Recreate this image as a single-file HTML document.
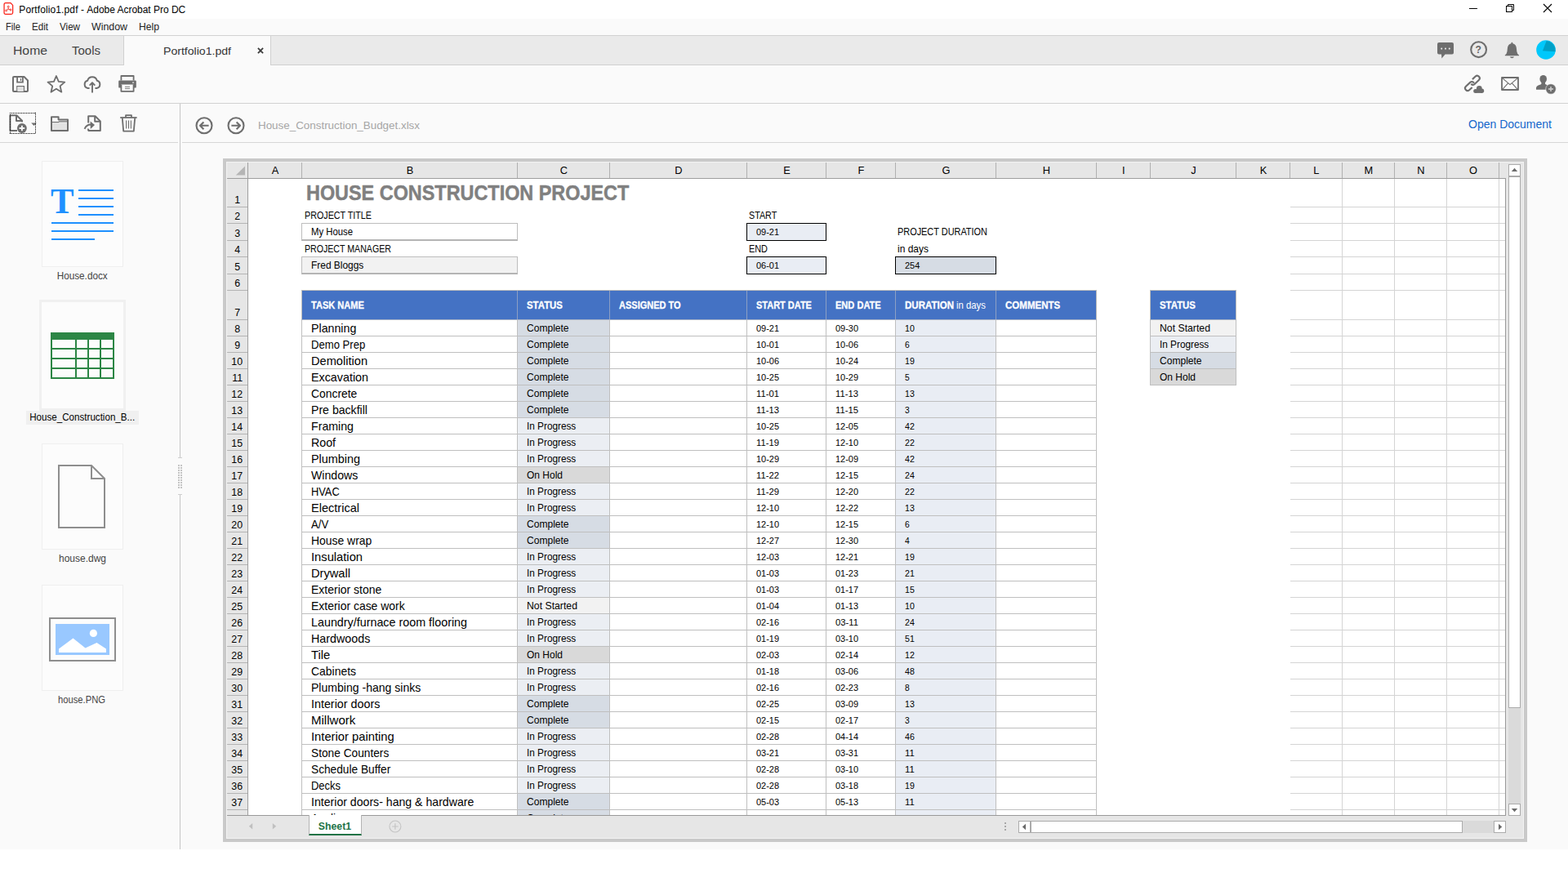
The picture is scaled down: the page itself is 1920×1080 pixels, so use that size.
<!DOCTYPE html>
<html lang="en">
<head>
<meta charset="utf-8">
<title>Portfolio1.pdf - Adobe Acrobat Pro DC</title>
<style>
*{box-sizing:border-box}
html,body{margin:0;padding:0}
body{width:1920px;height:1080px;position:relative;overflow:hidden;background:#fff;font-family:"Liberation Sans",sans-serif;}
.t{position:absolute;white-space:nowrap;line-height:1;display:block}
.r{position:absolute}
.ov{position:absolute;overflow:visible}
</style>
</head>
<body>
<div class="r" style="left:0px;top:0px;width:1920px;height:23px;background:#ffffff;"></div>
<div class="r" style="left:0px;top:23px;width:1920px;height:20px;background:#fafafa;"></div>
<div class="r" style="left:0px;top:43px;width:1920px;height:1px;background:#d2d2d2;"></div>
<div class="r" style="left:0px;top:44px;width:1920px;height:35px;background:#eaeaea;"></div>
<div class="r" style="left:0px;top:79px;width:1920px;height:1px;background:#d0d0d0;"></div>
<div class="r" style="left:151px;top:44px;width:1px;height:36px;background:#d0d0d0;"></div>
<div class="r" style="left:152px;top:44px;width:179px;height:36px;background:#fafafa;"></div>
<div class="r" style="left:331px;top:44px;width:1px;height:36px;background:#d0d0d0;"></div>
<div class="r" style="left:0px;top:80px;width:1920px;height:46px;background:#fafafa;"></div>
<div class="r" style="left:0px;top:126px;width:1920px;height:1px;background:#d2d2d2;"></div>
<div class="r" style="left:0px;top:127px;width:1920px;height:913px;background:#fafafa;"></div>
<div class="r" style="left:220px;top:127px;width:1px;height:913px;background:#c6c6c6;"></div>
<div class="r" style="left:0px;top:174px;width:218px;height:1px;background:#d6d6d6;"></div>
<div class="r" style="left:223px;top:174px;width:1697px;height:1px;background:#d6d6d6;"></div>
<svg class="ov" style="left:4px;top:3.4px" width="13" height="15" viewBox="0 0 13 16"><path d="M2.6 0.7 H9.2 L12 3.6 V13.4 Q12 15.3 10 15.3 H2.6 Q0.7 15.3 0.7 13.4 V2.6 Q0.7 0.7 2.6 0.7 Z" fill="#fff" stroke="#fa1e14" stroke-width="1.3"/><circle cx="6.2" cy="5.6" r="1.1" fill="none" stroke="#f0261c" stroke-width="0.9"/><circle cx="3.4" cy="10.6" r="1.1" fill="none" stroke="#f0261c" stroke-width="0.9"/><circle cx="9.2" cy="9.6" r="1.1" fill="none" stroke="#f0261c" stroke-width="0.9"/><path d="M6.2 6.6 L6 8.6 L4 10 M6 8.6 L8.3 9.3" fill="none" stroke="#f0261c" stroke-width="0.9"/></svg>
<span class="t" style="left:23.3px;top:5.84px;font-size:12px;color:#000;"><span style="letter-spacing:0.113px">Portfolio1.pdf</span> <span style="letter-spacing:0">-</span> <span style="letter-spacing:-0.025px">Adobe Acrobat Pro DC</span></span>
<div class="r" style="left:1799px;top:10px;width:10px;height:1px;background:#000;"></div>
<svg class="ov" style="left:1843px;top:4px" width="12" height="12" viewBox="0 0 12 12"><path d="M3.5 3.5 V1.5 H10.5 V8.5 H8.5" fill="none" stroke="#000" stroke-width="1"/><rect x="1.5" y="3.5" width="7" height="7" fill="none" stroke="#000" stroke-width="1"/></svg>
<svg class="ov" style="left:1890px;top:5px" width="10" height="10" viewBox="0 0 10 10"><path d="M0 0 L10 10 M10 0 L0 10" fill="none" stroke="#000" stroke-width="1.1"/></svg>
<span class="t" style="left:7.00px;top:26.84px;font-size:12.00px;color:#222;transform:scaleX(0.9309);transform-origin:0 0;">File</span>
<span class="t" style="left:39.00px;top:26.84px;font-size:12.00px;color:#222;transform:scaleX(0.9672);transform-origin:0 0;">Edit</span>
<span class="t" style="left:73.00px;top:26.84px;font-size:12.00px;color:#222;transform:scaleX(0.9692);transform-origin:0 0;">View</span>
<span class="t" style="left:112.00px;top:26.84px;font-size:12.00px;color:#222;transform:scaleX(1.0309);transform-origin:0 0;">Window</span>
<span class="t" style="left:170.00px;top:26.84px;font-size:12.00px;color:#222;transform:scaleX(1.0130);transform-origin:0 0;">Help</span>
<span class="t" style="left:16.00px;top:54.30px;font-size:15.00px;color:#444;transform:scaleX(1.0497);transform-origin:0 0;">Home</span>
<span class="t" style="left:88.00px;top:54.30px;font-size:15.00px;color:#444;transform:scaleX(0.9995);transform-origin:0 0;">Tools</span>
<span class="t" style="left:200.00px;top:55.57px;font-size:13.50px;color:#333;transform:scaleX(1.0434);transform-origin:0 0;">Portfolio1.pdf</span>
<svg class="ov" style="left:314.5px;top:57.6px" width="8" height="8" viewBox="0 0 8 8"><path d="M0.9 0.9 L7.1 7.1 M7.1 0.9 L0.9 7.1" fill="none" stroke="#3c3c3c" stroke-width="1.8"/></svg>
<span class="t" style="left:316.00px;top:146.50px;font-size:13.00px;color:#a6a6a6;transform:scaleX(1.0301);transform-origin:0 0;">House_Construction_Budget.xlsx</span>
<span class="t" style="left:1798.00px;top:145.15px;font-size:14.00px;color:#1467cc;transform:scaleX(1.0005);transform-origin:0 0;">Open Document</span>
<div class="r" style="left:51px;top:197px;width:100px;height:130px;background:#fcfcfc;border:1px solid #efefef;"></div>
<div class="r" style="left:48px;top:367px;width:106px;height:136px;background:#fcfcfc;border:3px solid #f0f0f0;"></div>
<div class="r" style="left:32px;top:503px;width:138px;height:17px;background:#f0f0f0;"></div>
<div class="r" style="left:51px;top:543px;width:100px;height:130px;background:#fcfcfc;border:1px solid #efefef;"></div>
<div class="r" style="left:51px;top:716px;width:100px;height:130px;background:#fcfcfc;border:1px solid #efefef;"></div>
<svg class="ov" style="left:0;top:0" width="240" height="1080" viewBox="0 0 240 1080">
<rect x="96" y="232" width="43" height="2" fill="#1e90ff"/>
<rect x="96" y="242" width="43" height="2" fill="#1e90ff"/>
<rect x="96" y="252" width="43" height="2" fill="#1e90ff"/>
<rect x="96" y="262" width="43" height="2" fill="#1e90ff"/>
<rect x="63" y="272" width="76" height="2" fill="#1e90ff"/>
<rect x="63" y="282" width="76" height="2" fill="#1e90ff"/>
<rect x="63" y="292" width="53" height="2" fill="#1e90ff"/>
<rect x="62" y="407" width="78" height="57" fill="#2c8645"/>
<rect x="64" y="416" width="28" height="10" fill="#fcfcfc"/>
<rect x="64" y="428" width="28" height="10" fill="#fcfcfc"/>
<rect x="64" y="440" width="28" height="10" fill="#fcfcfc"/>
<rect x="64" y="452" width="28" height="10" fill="#fcfcfc"/>
<rect x="94" y="416" width="13" height="10" fill="#fcfcfc"/>
<rect x="94" y="428" width="13" height="10" fill="#fcfcfc"/>
<rect x="94" y="440" width="13" height="10" fill="#fcfcfc"/>
<rect x="94" y="452" width="13" height="10" fill="#fcfcfc"/>
<rect x="109" y="416" width="13" height="10" fill="#fcfcfc"/>
<rect x="109" y="428" width="13" height="10" fill="#fcfcfc"/>
<rect x="109" y="440" width="13" height="10" fill="#fcfcfc"/>
<rect x="109" y="452" width="13" height="10" fill="#fcfcfc"/>
<rect x="124" y="416" width="14" height="10" fill="#fcfcfc"/>
<rect x="124" y="428" width="14" height="10" fill="#fcfcfc"/>
<rect x="124" y="440" width="14" height="10" fill="#fcfcfc"/>
<rect x="124" y="452" width="14" height="10" fill="#fcfcfc"/>
<path d="M72 570 H112 L128 586 V646 H72 Z M112 570 V586 H128" fill="none" stroke="#8e8e8e" stroke-width="2" stroke-linejoin="miter"/>
<rect x="61" y="757" width="80" height="52" fill="#fcfcfc" stroke="#8e8e8e" stroke-width="2"/>
<rect x="68" y="764" width="66" height="38" fill="#99c8ff"/>
<circle cx="114.4" cy="775.4" r="4.6" fill="#fff"/>
<path d="M72 799 V794.5 L89.5 781.5 L104.5 793.6 L118.5 787 L130 794.5 V799 Z" fill="#fff"/>
<rect x="217" y="561" width="7" height="44" fill="#fafafa"/>
<path d="M218 560.5 H223 M218 605.5 H223" stroke="#cfcfcf" stroke-width="1" fill="none"/>
<rect x="218" y="569" width="2" height="2" fill="#c4c4c4"/><rect x="221" y="569" width="2" height="2" fill="#c4c4c4"/>
<rect x="218" y="572" width="2" height="2" fill="#c4c4c4"/><rect x="221" y="572" width="2" height="2" fill="#c4c4c4"/>
<rect x="218" y="575" width="2" height="2" fill="#c4c4c4"/><rect x="221" y="575" width="2" height="2" fill="#c4c4c4"/>
<rect x="218" y="578" width="2" height="2" fill="#c4c4c4"/><rect x="221" y="578" width="2" height="2" fill="#c4c4c4"/>
<rect x="218" y="581" width="2" height="2" fill="#c4c4c4"/><rect x="221" y="581" width="2" height="2" fill="#c4c4c4"/>
<rect x="218" y="584" width="2" height="2" fill="#c4c4c4"/><rect x="221" y="584" width="2" height="2" fill="#c4c4c4"/>
<rect x="218" y="587" width="2" height="2" fill="#c4c4c4"/><rect x="221" y="587" width="2" height="2" fill="#c4c4c4"/>
<rect x="218" y="590" width="2" height="2" fill="#c4c4c4"/><rect x="221" y="590" width="2" height="2" fill="#c4c4c4"/>
<rect x="218" y="593" width="2" height="2" fill="#c4c4c4"/><rect x="221" y="593" width="2" height="2" fill="#c4c4c4"/>
<rect x="218" y="596" width="2" height="2" fill="#c4c4c4"/><rect x="221" y="596" width="2" height="2" fill="#c4c4c4"/>
</svg>
<span class="t" style="left:62.4px;top:223.6px;font-size:45px;font-weight:bold;color:#1e90ff;font-family:'Liberation Serif',serif;transform:scaleX(0.95);transform-origin:0 0;">T</span>
<span class="t" style="left:68.82px;top:331.84px;font-size:12.00px;color:#444;transform:scaleX(0.9784);transform-origin:50% 0;">House.docx</span>
<span class="t" style="left:34.30px;top:504.84px;font-size:12.00px;color:#000;transform:scaleX(0.9670);transform-origin:50% 0;">House_Construction_B...</span>
<span class="t" style="left:71.98px;top:677.84px;font-size:12.00px;color:#444;transform:scaleX(0.9993);transform-origin:50% 0;">house.dwg</span>
<span class="t" style="left:69.48px;top:851.34px;font-size:12.00px;color:#444;transform:scaleX(0.9350);transform-origin:50% 0;">house.PNG</span>
<div class="r" style="left:273px;top:194px;width:1597px;height:837px;background:#c9c9c9;"></div>
<div class="r" style="left:277px;top:198px;width:1589px;height:829px;background:#f3f3f3;"></div>
<div class="r" style="left:278px;top:199px;width:1587px;height:827px;background:#e6e6e6;"></div>
<div class="r" style="left:304px;top:219px;width:1539px;height:779px;background:#fff;overflow:hidden">
<div class="r" style="left:1276px;top:34px;width:264px;height:1px;background:#d4d4d4;"></div>
<div class="r" style="left:1276px;top:54px;width:264px;height:1px;background:#d4d4d4;"></div>
<div class="r" style="left:1276px;top:75px;width:264px;height:1px;background:#d4d4d4;"></div>
<div class="r" style="left:1276px;top:95px;width:264px;height:1px;background:#d4d4d4;"></div>
<div class="r" style="left:1276px;top:116px;width:264px;height:1px;background:#d4d4d4;"></div>
<div class="r" style="left:1276px;top:136px;width:264px;height:1px;background:#d4d4d4;"></div>
<div class="r" style="left:1276px;top:172px;width:264px;height:1px;background:#d4d4d4;"></div>
<div class="r" style="left:1276px;top:192px;width:264px;height:1px;background:#d4d4d4;"></div>
<div class="r" style="left:1276px;top:212px;width:264px;height:1px;background:#d4d4d4;"></div>
<div class="r" style="left:1276px;top:232px;width:264px;height:1px;background:#d4d4d4;"></div>
<div class="r" style="left:1276px;top:252px;width:264px;height:1px;background:#d4d4d4;"></div>
<div class="r" style="left:1276px;top:272px;width:264px;height:1px;background:#d4d4d4;"></div>
<div class="r" style="left:1276px;top:292px;width:264px;height:1px;background:#d4d4d4;"></div>
<div class="r" style="left:1276px;top:312px;width:264px;height:1px;background:#d4d4d4;"></div>
<div class="r" style="left:1276px;top:332px;width:264px;height:1px;background:#d4d4d4;"></div>
<div class="r" style="left:1276px;top:352px;width:264px;height:1px;background:#d4d4d4;"></div>
<div class="r" style="left:1276px;top:372px;width:264px;height:1px;background:#d4d4d4;"></div>
<div class="r" style="left:1276px;top:392px;width:264px;height:1px;background:#d4d4d4;"></div>
<div class="r" style="left:1276px;top:412px;width:264px;height:1px;background:#d4d4d4;"></div>
<div class="r" style="left:1276px;top:432px;width:264px;height:1px;background:#d4d4d4;"></div>
<div class="r" style="left:1276px;top:452px;width:264px;height:1px;background:#d4d4d4;"></div>
<div class="r" style="left:1276px;top:472px;width:264px;height:1px;background:#d4d4d4;"></div>
<div class="r" style="left:1276px;top:492px;width:264px;height:1px;background:#d4d4d4;"></div>
<div class="r" style="left:1276px;top:512px;width:264px;height:1px;background:#d4d4d4;"></div>
<div class="r" style="left:1276px;top:532px;width:264px;height:1px;background:#d4d4d4;"></div>
<div class="r" style="left:1276px;top:552px;width:264px;height:1px;background:#d4d4d4;"></div>
<div class="r" style="left:1276px;top:572px;width:264px;height:1px;background:#d4d4d4;"></div>
<div class="r" style="left:1276px;top:592px;width:264px;height:1px;background:#d4d4d4;"></div>
<div class="r" style="left:1276px;top:612px;width:264px;height:1px;background:#d4d4d4;"></div>
<div class="r" style="left:1276px;top:632px;width:264px;height:1px;background:#d4d4d4;"></div>
<div class="r" style="left:1276px;top:652px;width:264px;height:1px;background:#d4d4d4;"></div>
<div class="r" style="left:1276px;top:672px;width:264px;height:1px;background:#d4d4d4;"></div>
<div class="r" style="left:1276px;top:692px;width:264px;height:1px;background:#d4d4d4;"></div>
<div class="r" style="left:1276px;top:712px;width:264px;height:1px;background:#d4d4d4;"></div>
<div class="r" style="left:1276px;top:732px;width:264px;height:1px;background:#d4d4d4;"></div>
<div class="r" style="left:1276px;top:752px;width:264px;height:1px;background:#d4d4d4;"></div>
<div class="r" style="left:1276px;top:772px;width:264px;height:1px;background:#d4d4d4;"></div>
<div class="r" style="left:1339px;top:0px;width:1px;height:779px;background:#d4d4d4;"></div>
<div class="r" style="left:1403px;top:0px;width:1px;height:779px;background:#d4d4d4;"></div>
<div class="r" style="left:1467px;top:0px;width:1px;height:779px;background:#d4d4d4;"></div>
<div class="r" style="left:1531px;top:0px;width:1px;height:779px;background:#d4d4d4;"></div>
<span class="t" style="left:71.00px;top:4.02px;font-size:26.20px;color:#808080;font-weight:bold;transform:scaleX(0.8937);transform-origin:0 0;-webkit-text-stroke:0.5px #808080;">HOUSE CONSTRUCTION PROJECT</span>
<span class="t" style="left:68.50px;top:38.50px;font-size:12.40px;color:#000;transform:scaleX(0.8665);transform-origin:0 0;">PROJECT TITLE</span>
<span class="t" style="left:68.50px;top:79.50px;font-size:12.40px;color:#000;transform:scaleX(0.8563);transform-origin:0 0;">PROJECT MANAGER</span>
<span class="t" style="left:613.30px;top:38.50px;font-size:12.40px;color:#000;transform:scaleX(0.8683);transform-origin:0 0;">START</span>
<span class="t" style="left:613.30px;top:79.50px;font-size:12.40px;color:#000;transform:scaleX(0.8785);transform-origin:0 0;">END</span>
<span class="t" style="left:795.00px;top:58.50px;font-size:12.40px;color:#000;transform:scaleX(0.8805);transform-origin:0 0;">PROJECT DURATION</span>
<span class="t" style="left:795.00px;top:79.50px;font-size:12.40px;color:#000;transform:scaleX(0.9672);transform-origin:0 0;">in days</span>
<div class="r" style="left:65px;top:54px;width:265px;height:22px;background:#ffffff;border:1px solid #bdbdbd;border-bottom:2px solid #b4b4b4;"></div>
<div class="r" style="left:65px;top:95px;width:265px;height:22px;background:#f2f2f2;border:1px solid #bdbdbd;border-bottom:2px solid #b4b4b4;"></div>
<div class="r" style="left:610px;top:54px;width:98px;height:22px;background:#e9edf4;border:1px solid #000;"></div>
<div class="r" style="left:610px;top:95px;width:98px;height:22px;background:#e9edf4;border:1px solid #000;"></div>
<div class="r" style="left:792px;top:95px;width:124px;height:22px;background:#d6dce4;border:1px solid #000;"></div>
<span class="t" style="left:77.00px;top:58.70px;font-size:12.40px;color:#000;transform:scaleX(0.9137);transform-origin:0 0;">My House</span>
<span class="t" style="left:77.00px;top:99.70px;font-size:12.40px;color:#000;transform:scaleX(0.9618);transform-origin:0 0;">Fred Bloggs</span>
<span class="t" style="left:622.00px;top:59.55px;font-size:11.40px;color:#000;transform:scaleX(0.9603);transform-origin:0 0;">09-21</span>
<span class="t" style="left:622.00px;top:100.55px;font-size:11.40px;color:#000;transform:scaleX(0.9603);transform-origin:0 0;">06-01</span>
<span class="t" style="left:804.00px;top:100.55px;font-size:11.40px;color:#000;transform:scaleX(0.9621);transform-origin:0 0;">254</span>
<div class="r" style="left:65px;top:137px;width:974px;height:36px;background:#4472c4;"></div>
<div class="r" style="left:329px;top:137px;width:1px;height:36px;background:#8c9fc4;"></div>
<div class="r" style="left:442px;top:137px;width:1px;height:36px;background:#8c9fc4;"></div>
<div class="r" style="left:610px;top:137px;width:1px;height:36px;background:#8c9fc4;"></div>
<div class="r" style="left:707px;top:137px;width:1px;height:36px;background:#8c9fc4;"></div>
<div class="r" style="left:792px;top:137px;width:1px;height:36px;background:#8c9fc4;"></div>
<div class="r" style="left:915px;top:137px;width:1px;height:36px;background:#8c9fc4;"></div>
<div class="r" style="left:65px;top:136px;width:1px;height:37px;background:#bcbcbc;"></div>
<div class="r" style="left:1038px;top:136px;width:1px;height:37px;background:#bcbcbc;"></div>
<div class="r" style="left:65px;top:136px;width:974px;height:1px;background:#bcbcbc;"></div>
<div class="r" style="left:65px;top:172px;width:974px;height:1px;background:#a9b3c6;"></div>
<span class="t" style="left:77.00px;top:148.50px;font-size:12.40px;color:#fff;font-weight:bold;transform:scaleX(0.8930);transform-origin:0 0;-webkit-text-stroke:0.3px #fff;">TASK NAME</span>
<span class="t" style="left:341.00px;top:148.50px;font-size:12.40px;color:#fff;font-weight:bold;transform:scaleX(0.9213);transform-origin:0 0;-webkit-text-stroke:0.3px #fff;">STATUS</span>
<span class="t" style="left:454.00px;top:148.50px;font-size:12.40px;color:#fff;font-weight:bold;transform:scaleX(0.8884);transform-origin:0 0;-webkit-text-stroke:0.3px #fff;">ASSIGNED TO</span>
<span class="t" style="left:622.00px;top:148.50px;font-size:12.40px;color:#fff;font-weight:bold;transform:scaleX(0.8867);transform-origin:0 0;-webkit-text-stroke:0.3px #fff;">START DATE</span>
<span class="t" style="left:719.00px;top:148.50px;font-size:12.40px;color:#fff;font-weight:bold;transform:scaleX(0.8918);transform-origin:0 0;-webkit-text-stroke:0.3px #fff;">END DATE</span>
<span class="t" style="left:804.00px;top:148.50px;font-size:12.40px;color:#fff;font-weight:bold;transform:scaleX(0.9300);transform-origin:0 0;-webkit-text-stroke:0.3px #fff;">DURATION</span>
<span class="t" style="left:867.00px;top:148.50px;font-size:12.40px;color:#fff;transform:scaleX(0.9163);transform-origin:0 0;">in days</span>
<span class="t" style="left:927.00px;top:148.50px;font-size:12.40px;color:#fff;font-weight:bold;transform:scaleX(0.9305);transform-origin:0 0;-webkit-text-stroke:0.3px #fff;">COMMENTS</span>
<div class="r" style="left:1104px;top:137px;width:106px;height:36px;background:#4472c4;"></div>
<div class="r" style="left:1104px;top:136px;width:1px;height:37px;background:#bcbcbc;"></div>
<div class="r" style="left:1209px;top:136px;width:1px;height:37px;background:#bcbcbc;"></div>
<div class="r" style="left:1104px;top:136px;width:106px;height:1px;background:#bcbcbc;"></div>
<span class="t" style="left:1116.00px;top:148.50px;font-size:12.40px;color:#fff;font-weight:bold;transform:scaleX(0.9213);transform-origin:0 0;-webkit-text-stroke:0.3px #fff;">STATUS</span>
<div class="r" style="left:1104px;top:173px;width:106px;height:20px;background:#f2f2f2;border-left:1px solid #bfbfbf;border-right:1px solid #bfbfbf;border-bottom:1px solid #bfbfbf;"></div>
<span class="t" style="left:1116.00px;top:176.70px;font-size:12.40px;color:#000;transform:scaleX(0.9885);transform-origin:0 0;">Not Started</span>
<div class="r" style="left:1104px;top:193px;width:106px;height:20px;background:#ebeef3;border-left:1px solid #bfbfbf;border-right:1px solid #bfbfbf;border-bottom:1px solid #bfbfbf;"></div>
<span class="t" style="left:1116.00px;top:196.70px;font-size:12.40px;color:#000;transform:scaleX(0.9510);transform-origin:0 0;">In Progress</span>
<div class="r" style="left:1104px;top:213px;width:106px;height:20px;background:#d6dce4;border-left:1px solid #bfbfbf;border-right:1px solid #bfbfbf;border-bottom:1px solid #bfbfbf;"></div>
<span class="t" style="left:1116.00px;top:216.70px;font-size:12.40px;color:#000;transform:scaleX(0.9723);transform-origin:0 0;">Complete</span>
<div class="r" style="left:1104px;top:233px;width:106px;height:20px;background:#d9d9d9;border-left:1px solid #bfbfbf;border-right:1px solid #bfbfbf;border-bottom:1px solid #bfbfbf;"></div>
<span class="t" style="left:1116.00px;top:236.70px;font-size:12.40px;color:#000;transform:scaleX(0.9673);transform-origin:0 0;">On Hold</span>
<div class="r" style="left:1104px;top:172px;width:106px;height:1px;background:#a9b3c6;"></div>
<div class="r" style="left:330px;top:173px;width:112px;height:19px;background:#d6dce4;"></div>
<div class="r" style="left:793px;top:173px;width:122px;height:19px;background:#e9edf4;"></div>
<div class="r" style="left:65px;top:192px;width:974px;height:1px;background:#bfbfbf;"></div>
<span class="t" style="left:77.00px;top:174.50px;font-size:15.00px;color:#000;transform:scaleX(0.9472);transform-origin:0 0;">Planning</span>
<span class="t" style="left:341.00px;top:176.70px;font-size:12.40px;color:#000;transform:scaleX(0.9723);transform-origin:0 0;">Complete</span>
<span class="t" style="left:622.00px;top:177.55px;font-size:11.40px;color:#000;transform:scaleX(0.9603);transform-origin:0 0;">09-21</span>
<span class="t" style="left:719.00px;top:177.55px;font-size:11.40px;color:#000;transform:scaleX(0.9603);transform-origin:0 0;">09-30</span>
<span class="t" style="left:804.00px;top:177.55px;font-size:11.40px;color:#000;transform:scaleX(0.9306);transform-origin:0 0;">10</span>
<div class="r" style="left:330px;top:193px;width:112px;height:19px;background:#d6dce4;"></div>
<div class="r" style="left:793px;top:193px;width:122px;height:19px;background:#e9edf4;"></div>
<div class="r" style="left:65px;top:212px;width:974px;height:1px;background:#bfbfbf;"></div>
<span class="t" style="left:77.00px;top:194.50px;font-size:15.00px;color:#000;transform:scaleX(0.8739);transform-origin:0 0;">Demo Prep</span>
<span class="t" style="left:341.00px;top:196.70px;font-size:12.40px;color:#000;transform:scaleX(0.9723);transform-origin:0 0;">Complete</span>
<span class="t" style="left:622.00px;top:197.55px;font-size:11.40px;color:#000;transform:scaleX(0.9603);transform-origin:0 0;">10-01</span>
<span class="t" style="left:719.00px;top:197.55px;font-size:11.40px;color:#000;transform:scaleX(0.9603);transform-origin:0 0;">10-06</span>
<span class="t" style="left:804.00px;top:197.55px;font-size:11.40px;color:#000;transform:scaleX(0.8990);transform-origin:0 0;">6</span>
<div class="r" style="left:330px;top:213px;width:112px;height:19px;background:#d6dce4;"></div>
<div class="r" style="left:793px;top:213px;width:122px;height:19px;background:#e9edf4;"></div>
<div class="r" style="left:65px;top:232px;width:974px;height:1px;background:#bfbfbf;"></div>
<span class="t" style="left:77.00px;top:214.50px;font-size:15.00px;color:#000;transform:scaleX(0.9737);transform-origin:0 0;">Demolition</span>
<span class="t" style="left:341.00px;top:216.70px;font-size:12.40px;color:#000;transform:scaleX(0.9723);transform-origin:0 0;">Complete</span>
<span class="t" style="left:622.00px;top:217.55px;font-size:11.40px;color:#000;transform:scaleX(0.9603);transform-origin:0 0;">10-06</span>
<span class="t" style="left:719.00px;top:217.55px;font-size:11.40px;color:#000;transform:scaleX(0.9603);transform-origin:0 0;">10-24</span>
<span class="t" style="left:804.00px;top:217.55px;font-size:11.40px;color:#000;transform:scaleX(0.9306);transform-origin:0 0;">19</span>
<div class="r" style="left:330px;top:233px;width:112px;height:19px;background:#d6dce4;"></div>
<div class="r" style="left:793px;top:233px;width:122px;height:19px;background:#e9edf4;"></div>
<div class="r" style="left:65px;top:252px;width:974px;height:1px;background:#bfbfbf;"></div>
<span class="t" style="left:77.00px;top:234.50px;font-size:15.00px;color:#000;transform:scaleX(0.9540);transform-origin:0 0;">Excavation</span>
<span class="t" style="left:341.00px;top:236.70px;font-size:12.40px;color:#000;transform:scaleX(0.9723);transform-origin:0 0;">Complete</span>
<span class="t" style="left:622.00px;top:237.55px;font-size:11.40px;color:#000;transform:scaleX(0.9603);transform-origin:0 0;">10-25</span>
<span class="t" style="left:719.00px;top:237.55px;font-size:11.40px;color:#000;transform:scaleX(0.9603);transform-origin:0 0;">10-29</span>
<span class="t" style="left:804.00px;top:237.55px;font-size:11.40px;color:#000;transform:scaleX(0.8990);transform-origin:0 0;">5</span>
<div class="r" style="left:330px;top:253px;width:112px;height:19px;background:#d6dce4;"></div>
<div class="r" style="left:793px;top:253px;width:122px;height:19px;background:#e9edf4;"></div>
<div class="r" style="left:65px;top:272px;width:974px;height:1px;background:#bfbfbf;"></div>
<span class="t" style="left:77.00px;top:254.50px;font-size:15.00px;color:#000;transform:scaleX(0.9250);transform-origin:0 0;">Concrete</span>
<span class="t" style="left:341.00px;top:256.70px;font-size:12.40px;color:#000;transform:scaleX(0.9723);transform-origin:0 0;">Complete</span>
<span class="t" style="left:622.00px;top:257.55px;font-size:11.40px;color:#000;transform:scaleX(0.9890);transform-origin:0 0;">11-01</span>
<span class="t" style="left:719.00px;top:257.55px;font-size:11.40px;color:#000;transform:scaleX(0.9890);transform-origin:0 0;">11-13</span>
<span class="t" style="left:804.00px;top:257.55px;font-size:11.40px;color:#000;transform:scaleX(0.9306);transform-origin:0 0;">13</span>
<div class="r" style="left:330px;top:273px;width:112px;height:19px;background:#d6dce4;"></div>
<div class="r" style="left:793px;top:273px;width:122px;height:19px;background:#e9edf4;"></div>
<div class="r" style="left:65px;top:292px;width:974px;height:1px;background:#bfbfbf;"></div>
<span class="t" style="left:77.00px;top:274.50px;font-size:15.00px;color:#000;transform:scaleX(0.9406);transform-origin:0 0;">Pre backfill</span>
<span class="t" style="left:341.00px;top:276.70px;font-size:12.40px;color:#000;transform:scaleX(0.9723);transform-origin:0 0;">Complete</span>
<span class="t" style="left:622.00px;top:277.55px;font-size:11.40px;color:#000;transform:scaleX(0.9890);transform-origin:0 0;">11-13</span>
<span class="t" style="left:719.00px;top:277.55px;font-size:11.40px;color:#000;transform:scaleX(0.9890);transform-origin:0 0;">11-15</span>
<span class="t" style="left:804.00px;top:277.55px;font-size:11.40px;color:#000;transform:scaleX(0.8990);transform-origin:0 0;">3</span>
<div class="r" style="left:330px;top:293px;width:112px;height:19px;background:#ebeef3;"></div>
<div class="r" style="left:793px;top:293px;width:122px;height:19px;background:#e9edf4;"></div>
<div class="r" style="left:65px;top:312px;width:974px;height:1px;background:#bfbfbf;"></div>
<span class="t" style="left:77.00px;top:294.50px;font-size:15.00px;color:#000;transform:scaleX(0.9452);transform-origin:0 0;">Framing</span>
<span class="t" style="left:341.00px;top:296.70px;font-size:12.40px;color:#000;transform:scaleX(0.9510);transform-origin:0 0;">In Progress</span>
<span class="t" style="left:622.00px;top:297.55px;font-size:11.40px;color:#000;transform:scaleX(0.9603);transform-origin:0 0;">10-25</span>
<span class="t" style="left:719.00px;top:297.55px;font-size:11.40px;color:#000;transform:scaleX(0.9603);transform-origin:0 0;">12-05</span>
<span class="t" style="left:804.00px;top:297.55px;font-size:11.40px;color:#000;transform:scaleX(0.9306);transform-origin:0 0;">42</span>
<div class="r" style="left:330px;top:313px;width:112px;height:19px;background:#ebeef3;"></div>
<div class="r" style="left:793px;top:313px;width:122px;height:19px;background:#e9edf4;"></div>
<div class="r" style="left:65px;top:332px;width:974px;height:1px;background:#bfbfbf;"></div>
<span class="t" style="left:77.00px;top:314.50px;font-size:15.00px;color:#000;transform:scaleX(0.9468);transform-origin:0 0;">Roof</span>
<span class="t" style="left:341.00px;top:316.70px;font-size:12.40px;color:#000;transform:scaleX(0.9510);transform-origin:0 0;">In Progress</span>
<span class="t" style="left:622.00px;top:317.55px;font-size:11.40px;color:#000;transform:scaleX(0.9890);transform-origin:0 0;">11-19</span>
<span class="t" style="left:719.00px;top:317.55px;font-size:11.40px;color:#000;transform:scaleX(0.9603);transform-origin:0 0;">12-10</span>
<span class="t" style="left:804.00px;top:317.55px;font-size:11.40px;color:#000;transform:scaleX(0.9306);transform-origin:0 0;">22</span>
<div class="r" style="left:330px;top:333px;width:112px;height:19px;background:#ebeef3;"></div>
<div class="r" style="left:793px;top:333px;width:122px;height:19px;background:#e9edf4;"></div>
<div class="r" style="left:65px;top:352px;width:974px;height:1px;background:#bfbfbf;"></div>
<span class="t" style="left:77.00px;top:334.50px;font-size:15.00px;color:#000;transform:scaleX(0.9595);transform-origin:0 0;">Plumbing</span>
<span class="t" style="left:341.00px;top:336.70px;font-size:12.40px;color:#000;transform:scaleX(0.9510);transform-origin:0 0;">In Progress</span>
<span class="t" style="left:622.00px;top:337.55px;font-size:11.40px;color:#000;transform:scaleX(0.9603);transform-origin:0 0;">10-29</span>
<span class="t" style="left:719.00px;top:337.55px;font-size:11.40px;color:#000;transform:scaleX(0.9603);transform-origin:0 0;">12-09</span>
<span class="t" style="left:804.00px;top:337.55px;font-size:11.40px;color:#000;transform:scaleX(0.9306);transform-origin:0 0;">42</span>
<div class="r" style="left:330px;top:353px;width:112px;height:19px;background:#d9d9d9;"></div>
<div class="r" style="left:793px;top:353px;width:122px;height:19px;background:#e9edf4;"></div>
<div class="r" style="left:65px;top:372px;width:974px;height:1px;background:#bfbfbf;"></div>
<span class="t" style="left:77.00px;top:354.50px;font-size:15.00px;color:#000;transform:scaleX(0.9417);transform-origin:0 0;">Windows</span>
<span class="t" style="left:341.00px;top:356.70px;font-size:12.40px;color:#000;transform:scaleX(0.9673);transform-origin:0 0;">On Hold</span>
<span class="t" style="left:622.00px;top:357.55px;font-size:11.40px;color:#000;transform:scaleX(0.9890);transform-origin:0 0;">11-22</span>
<span class="t" style="left:719.00px;top:357.55px;font-size:11.40px;color:#000;transform:scaleX(0.9603);transform-origin:0 0;">12-15</span>
<span class="t" style="left:804.00px;top:357.55px;font-size:11.40px;color:#000;transform:scaleX(0.9306);transform-origin:0 0;">24</span>
<div class="r" style="left:330px;top:373px;width:112px;height:19px;background:#ebeef3;"></div>
<div class="r" style="left:793px;top:373px;width:122px;height:19px;background:#e9edf4;"></div>
<div class="r" style="left:65px;top:392px;width:974px;height:1px;background:#bfbfbf;"></div>
<span class="t" style="left:77.00px;top:374.50px;font-size:15.00px;color:#000;transform:scaleX(0.8555);transform-origin:0 0;">HVAC</span>
<span class="t" style="left:341.00px;top:376.70px;font-size:12.40px;color:#000;transform:scaleX(0.9510);transform-origin:0 0;">In Progress</span>
<span class="t" style="left:622.00px;top:377.55px;font-size:11.40px;color:#000;transform:scaleX(0.9890);transform-origin:0 0;">11-29</span>
<span class="t" style="left:719.00px;top:377.55px;font-size:11.40px;color:#000;transform:scaleX(0.9603);transform-origin:0 0;">12-20</span>
<span class="t" style="left:804.00px;top:377.55px;font-size:11.40px;color:#000;transform:scaleX(0.9306);transform-origin:0 0;">22</span>
<div class="r" style="left:330px;top:393px;width:112px;height:19px;background:#ebeef3;"></div>
<div class="r" style="left:793px;top:393px;width:122px;height:19px;background:#e9edf4;"></div>
<div class="r" style="left:65px;top:412px;width:974px;height:1px;background:#bfbfbf;"></div>
<span class="t" style="left:77.00px;top:394.50px;font-size:15.00px;color:#000;transform:scaleX(0.9696);transform-origin:0 0;">Electrical</span>
<span class="t" style="left:341.00px;top:396.70px;font-size:12.40px;color:#000;transform:scaleX(0.9510);transform-origin:0 0;">In Progress</span>
<span class="t" style="left:622.00px;top:397.55px;font-size:11.40px;color:#000;transform:scaleX(0.9603);transform-origin:0 0;">12-10</span>
<span class="t" style="left:719.00px;top:397.55px;font-size:11.40px;color:#000;transform:scaleX(0.9603);transform-origin:0 0;">12-22</span>
<span class="t" style="left:804.00px;top:397.55px;font-size:11.40px;color:#000;transform:scaleX(0.9306);transform-origin:0 0;">13</span>
<div class="r" style="left:330px;top:413px;width:112px;height:19px;background:#d6dce4;"></div>
<div class="r" style="left:793px;top:413px;width:122px;height:19px;background:#e9edf4;"></div>
<div class="r" style="left:65px;top:432px;width:974px;height:1px;background:#bfbfbf;"></div>
<span class="t" style="left:77.00px;top:414.50px;font-size:15.00px;color:#000;transform:scaleX(0.8810);transform-origin:0 0;">A/V</span>
<span class="t" style="left:341.00px;top:416.70px;font-size:12.40px;color:#000;transform:scaleX(0.9723);transform-origin:0 0;">Complete</span>
<span class="t" style="left:622.00px;top:417.55px;font-size:11.40px;color:#000;transform:scaleX(0.9603);transform-origin:0 0;">12-10</span>
<span class="t" style="left:719.00px;top:417.55px;font-size:11.40px;color:#000;transform:scaleX(0.9603);transform-origin:0 0;">12-15</span>
<span class="t" style="left:804.00px;top:417.55px;font-size:11.40px;color:#000;transform:scaleX(0.8990);transform-origin:0 0;">6</span>
<div class="r" style="left:330px;top:433px;width:112px;height:19px;background:#d6dce4;"></div>
<div class="r" style="left:793px;top:433px;width:122px;height:19px;background:#e9edf4;"></div>
<div class="r" style="left:65px;top:452px;width:974px;height:1px;background:#bfbfbf;"></div>
<span class="t" style="left:77.00px;top:434.50px;font-size:15.00px;color:#000;transform:scaleX(0.9283);transform-origin:0 0;">House wrap</span>
<span class="t" style="left:341.00px;top:436.70px;font-size:12.40px;color:#000;transform:scaleX(0.9723);transform-origin:0 0;">Complete</span>
<span class="t" style="left:622.00px;top:437.55px;font-size:11.40px;color:#000;transform:scaleX(0.9603);transform-origin:0 0;">12-27</span>
<span class="t" style="left:719.00px;top:437.55px;font-size:11.40px;color:#000;transform:scaleX(0.9603);transform-origin:0 0;">12-30</span>
<span class="t" style="left:804.00px;top:437.55px;font-size:11.40px;color:#000;transform:scaleX(0.8990);transform-origin:0 0;">4</span>
<div class="r" style="left:330px;top:453px;width:112px;height:19px;background:#ebeef3;"></div>
<div class="r" style="left:793px;top:453px;width:122px;height:19px;background:#e9edf4;"></div>
<div class="r" style="left:65px;top:472px;width:974px;height:1px;background:#bfbfbf;"></div>
<span class="t" style="left:77.00px;top:454.50px;font-size:15.00px;color:#000;transform:scaleX(0.9811);transform-origin:0 0;">Insulation</span>
<span class="t" style="left:341.00px;top:456.70px;font-size:12.40px;color:#000;transform:scaleX(0.9510);transform-origin:0 0;">In Progress</span>
<span class="t" style="left:622.00px;top:457.55px;font-size:11.40px;color:#000;transform:scaleX(0.9603);transform-origin:0 0;">12-03</span>
<span class="t" style="left:719.00px;top:457.55px;font-size:11.40px;color:#000;transform:scaleX(0.9603);transform-origin:0 0;">12-21</span>
<span class="t" style="left:804.00px;top:457.55px;font-size:11.40px;color:#000;transform:scaleX(0.9306);transform-origin:0 0;">19</span>
<div class="r" style="left:330px;top:473px;width:112px;height:19px;background:#ebeef3;"></div>
<div class="r" style="left:793px;top:473px;width:122px;height:19px;background:#e9edf4;"></div>
<div class="r" style="left:65px;top:492px;width:974px;height:1px;background:#bfbfbf;"></div>
<span class="t" style="left:77.00px;top:474.50px;font-size:15.00px;color:#000;transform:scaleX(0.9762);transform-origin:0 0;">Drywall</span>
<span class="t" style="left:341.00px;top:476.70px;font-size:12.40px;color:#000;transform:scaleX(0.9510);transform-origin:0 0;">In Progress</span>
<span class="t" style="left:622.00px;top:477.55px;font-size:11.40px;color:#000;transform:scaleX(0.9603);transform-origin:0 0;">01-03</span>
<span class="t" style="left:719.00px;top:477.55px;font-size:11.40px;color:#000;transform:scaleX(0.9603);transform-origin:0 0;">01-23</span>
<span class="t" style="left:804.00px;top:477.55px;font-size:11.40px;color:#000;transform:scaleX(0.9306);transform-origin:0 0;">21</span>
<div class="r" style="left:330px;top:493px;width:112px;height:19px;background:#ebeef3;"></div>
<div class="r" style="left:793px;top:493px;width:122px;height:19px;background:#e9edf4;"></div>
<div class="r" style="left:65px;top:512px;width:974px;height:1px;background:#bfbfbf;"></div>
<span class="t" style="left:77.00px;top:494.50px;font-size:15.00px;color:#000;transform:scaleX(0.9325);transform-origin:0 0;">Exterior stone</span>
<span class="t" style="left:341.00px;top:496.70px;font-size:12.40px;color:#000;transform:scaleX(0.9510);transform-origin:0 0;">In Progress</span>
<span class="t" style="left:622.00px;top:497.55px;font-size:11.40px;color:#000;transform:scaleX(0.9603);transform-origin:0 0;">01-03</span>
<span class="t" style="left:719.00px;top:497.55px;font-size:11.40px;color:#000;transform:scaleX(0.9603);transform-origin:0 0;">01-17</span>
<span class="t" style="left:804.00px;top:497.55px;font-size:11.40px;color:#000;transform:scaleX(0.9306);transform-origin:0 0;">15</span>
<div class="r" style="left:330px;top:513px;width:112px;height:19px;background:#f2f2f2;"></div>
<div class="r" style="left:793px;top:513px;width:122px;height:19px;background:#e9edf4;"></div>
<div class="r" style="left:65px;top:532px;width:974px;height:1px;background:#bfbfbf;"></div>
<span class="t" style="left:77.00px;top:514.50px;font-size:15.00px;color:#000;transform:scaleX(0.9297);transform-origin:0 0;">Exterior case work</span>
<span class="t" style="left:341.00px;top:516.70px;font-size:12.40px;color:#000;transform:scaleX(0.9885);transform-origin:0 0;">Not Started</span>
<span class="t" style="left:622.00px;top:517.55px;font-size:11.40px;color:#000;transform:scaleX(0.9603);transform-origin:0 0;">01-04</span>
<span class="t" style="left:719.00px;top:517.55px;font-size:11.40px;color:#000;transform:scaleX(0.9603);transform-origin:0 0;">01-13</span>
<span class="t" style="left:804.00px;top:517.55px;font-size:11.40px;color:#000;transform:scaleX(0.9306);transform-origin:0 0;">10</span>
<div class="r" style="left:330px;top:533px;width:112px;height:19px;background:#ebeef3;"></div>
<div class="r" style="left:793px;top:533px;width:122px;height:19px;background:#e9edf4;"></div>
<div class="r" style="left:65px;top:552px;width:974px;height:1px;background:#bfbfbf;"></div>
<span class="t" style="left:77.00px;top:534.50px;font-size:15.00px;color:#000;transform:scaleX(0.9545);transform-origin:0 0;">Laundry/furnace room flooring</span>
<span class="t" style="left:341.00px;top:536.70px;font-size:12.40px;color:#000;transform:scaleX(0.9510);transform-origin:0 0;">In Progress</span>
<span class="t" style="left:622.00px;top:537.55px;font-size:11.40px;color:#000;transform:scaleX(0.9603);transform-origin:0 0;">02-16</span>
<span class="t" style="left:719.00px;top:537.55px;font-size:11.40px;color:#000;transform:scaleX(0.9890);transform-origin:0 0;">03-11</span>
<span class="t" style="left:804.00px;top:537.55px;font-size:11.40px;color:#000;transform:scaleX(0.9306);transform-origin:0 0;">24</span>
<div class="r" style="left:330px;top:553px;width:112px;height:19px;background:#ebeef3;"></div>
<div class="r" style="left:793px;top:553px;width:122px;height:19px;background:#e9edf4;"></div>
<div class="r" style="left:65px;top:572px;width:974px;height:1px;background:#bfbfbf;"></div>
<span class="t" style="left:77.00px;top:554.50px;font-size:15.00px;color:#000;transform:scaleX(0.9529);transform-origin:0 0;">Hardwoods</span>
<span class="t" style="left:341.00px;top:556.70px;font-size:12.40px;color:#000;transform:scaleX(0.9510);transform-origin:0 0;">In Progress</span>
<span class="t" style="left:622.00px;top:557.55px;font-size:11.40px;color:#000;transform:scaleX(0.9603);transform-origin:0 0;">01-19</span>
<span class="t" style="left:719.00px;top:557.55px;font-size:11.40px;color:#000;transform:scaleX(0.9603);transform-origin:0 0;">03-10</span>
<span class="t" style="left:804.00px;top:557.55px;font-size:11.40px;color:#000;transform:scaleX(0.9306);transform-origin:0 0;">51</span>
<div class="r" style="left:330px;top:573px;width:112px;height:19px;background:#d9d9d9;"></div>
<div class="r" style="left:793px;top:573px;width:122px;height:19px;background:#e9edf4;"></div>
<div class="r" style="left:65px;top:592px;width:974px;height:1px;background:#bfbfbf;"></div>
<span class="t" style="left:77.00px;top:574.50px;font-size:15.00px;color:#000;transform:scaleX(0.9867);transform-origin:0 0;">Tile</span>
<span class="t" style="left:341.00px;top:576.70px;font-size:12.40px;color:#000;transform:scaleX(0.9673);transform-origin:0 0;">On Hold</span>
<span class="t" style="left:622.00px;top:577.55px;font-size:11.40px;color:#000;transform:scaleX(0.9603);transform-origin:0 0;">02-03</span>
<span class="t" style="left:719.00px;top:577.55px;font-size:11.40px;color:#000;transform:scaleX(0.9603);transform-origin:0 0;">02-14</span>
<span class="t" style="left:804.00px;top:577.55px;font-size:11.40px;color:#000;transform:scaleX(0.9306);transform-origin:0 0;">12</span>
<div class="r" style="left:330px;top:593px;width:112px;height:19px;background:#ebeef3;"></div>
<div class="r" style="left:793px;top:593px;width:122px;height:19px;background:#e9edf4;"></div>
<div class="r" style="left:65px;top:612px;width:974px;height:1px;background:#bfbfbf;"></div>
<span class="t" style="left:77.00px;top:594.50px;font-size:15.00px;color:#000;transform:scaleX(0.9290);transform-origin:0 0;">Cabinets</span>
<span class="t" style="left:341.00px;top:596.70px;font-size:12.40px;color:#000;transform:scaleX(0.9510);transform-origin:0 0;">In Progress</span>
<span class="t" style="left:622.00px;top:597.55px;font-size:11.40px;color:#000;transform:scaleX(0.9603);transform-origin:0 0;">01-18</span>
<span class="t" style="left:719.00px;top:597.55px;font-size:11.40px;color:#000;transform:scaleX(0.9603);transform-origin:0 0;">03-06</span>
<span class="t" style="left:804.00px;top:597.55px;font-size:11.40px;color:#000;transform:scaleX(0.9306);transform-origin:0 0;">48</span>
<div class="r" style="left:330px;top:613px;width:112px;height:19px;background:#ebeef3;"></div>
<div class="r" style="left:793px;top:613px;width:122px;height:19px;background:#e9edf4;"></div>
<div class="r" style="left:65px;top:632px;width:974px;height:1px;background:#bfbfbf;"></div>
<span class="t" style="left:77.00px;top:614.50px;font-size:15.00px;color:#000;transform:scaleX(0.9365);transform-origin:0 0;">Plumbing -hang sinks</span>
<span class="t" style="left:341.00px;top:616.70px;font-size:12.40px;color:#000;transform:scaleX(0.9510);transform-origin:0 0;">In Progress</span>
<span class="t" style="left:622.00px;top:617.55px;font-size:11.40px;color:#000;transform:scaleX(0.9603);transform-origin:0 0;">02-16</span>
<span class="t" style="left:719.00px;top:617.55px;font-size:11.40px;color:#000;transform:scaleX(0.9603);transform-origin:0 0;">02-23</span>
<span class="t" style="left:804.00px;top:617.55px;font-size:11.40px;color:#000;transform:scaleX(0.8990);transform-origin:0 0;">8</span>
<div class="r" style="left:330px;top:633px;width:112px;height:19px;background:#d6dce4;"></div>
<div class="r" style="left:793px;top:633px;width:122px;height:19px;background:#e9edf4;"></div>
<div class="r" style="left:65px;top:652px;width:974px;height:1px;background:#bfbfbf;"></div>
<span class="t" style="left:77.00px;top:634.50px;font-size:15.00px;color:#000;transform:scaleX(0.9539);transform-origin:0 0;">Interior doors</span>
<span class="t" style="left:341.00px;top:636.70px;font-size:12.40px;color:#000;transform:scaleX(0.9723);transform-origin:0 0;">Complete</span>
<span class="t" style="left:622.00px;top:637.55px;font-size:11.40px;color:#000;transform:scaleX(0.9603);transform-origin:0 0;">02-25</span>
<span class="t" style="left:719.00px;top:637.55px;font-size:11.40px;color:#000;transform:scaleX(0.9603);transform-origin:0 0;">03-09</span>
<span class="t" style="left:804.00px;top:637.55px;font-size:11.40px;color:#000;transform:scaleX(0.9306);transform-origin:0 0;">13</span>
<div class="r" style="left:330px;top:653px;width:112px;height:19px;background:#d6dce4;"></div>
<div class="r" style="left:793px;top:653px;width:122px;height:19px;background:#e9edf4;"></div>
<div class="r" style="left:65px;top:672px;width:974px;height:1px;background:#bfbfbf;"></div>
<span class="t" style="left:77.00px;top:654.50px;font-size:15.00px;color:#000;transform:scaleX(1.0025);transform-origin:0 0;">Millwork</span>
<span class="t" style="left:341.00px;top:656.70px;font-size:12.40px;color:#000;transform:scaleX(0.9723);transform-origin:0 0;">Complete</span>
<span class="t" style="left:622.00px;top:657.55px;font-size:11.40px;color:#000;transform:scaleX(0.9603);transform-origin:0 0;">02-15</span>
<span class="t" style="left:719.00px;top:657.55px;font-size:11.40px;color:#000;transform:scaleX(0.9603);transform-origin:0 0;">02-17</span>
<span class="t" style="left:804.00px;top:657.55px;font-size:11.40px;color:#000;transform:scaleX(0.8990);transform-origin:0 0;">3</span>
<div class="r" style="left:330px;top:673px;width:112px;height:19px;background:#ebeef3;"></div>
<div class="r" style="left:793px;top:673px;width:122px;height:19px;background:#e9edf4;"></div>
<div class="r" style="left:65px;top:692px;width:974px;height:1px;background:#bfbfbf;"></div>
<span class="t" style="left:77.00px;top:674.50px;font-size:15.00px;color:#000;transform:scaleX(0.9836);transform-origin:0 0;">Interior painting</span>
<span class="t" style="left:341.00px;top:676.70px;font-size:12.40px;color:#000;transform:scaleX(0.9510);transform-origin:0 0;">In Progress</span>
<span class="t" style="left:622.00px;top:677.55px;font-size:11.40px;color:#000;transform:scaleX(0.9603);transform-origin:0 0;">02-28</span>
<span class="t" style="left:719.00px;top:677.55px;font-size:11.40px;color:#000;transform:scaleX(0.9603);transform-origin:0 0;">04-14</span>
<span class="t" style="left:804.00px;top:677.55px;font-size:11.40px;color:#000;transform:scaleX(0.9306);transform-origin:0 0;">46</span>
<div class="r" style="left:330px;top:693px;width:112px;height:19px;background:#ebeef3;"></div>
<div class="r" style="left:793px;top:693px;width:122px;height:19px;background:#e9edf4;"></div>
<div class="r" style="left:65px;top:712px;width:974px;height:1px;background:#bfbfbf;"></div>
<span class="t" style="left:77.00px;top:694.50px;font-size:15.00px;color:#000;transform:scaleX(0.9143);transform-origin:0 0;">Stone Counters</span>
<span class="t" style="left:341.00px;top:696.70px;font-size:12.40px;color:#000;transform:scaleX(0.9510);transform-origin:0 0;">In Progress</span>
<span class="t" style="left:622.00px;top:697.55px;font-size:11.40px;color:#000;transform:scaleX(0.9603);transform-origin:0 0;">03-21</span>
<span class="t" style="left:719.00px;top:697.55px;font-size:11.40px;color:#000;transform:scaleX(0.9603);transform-origin:0 0;">03-31</span>
<span class="t" style="left:804.00px;top:697.55px;font-size:11.40px;color:#000;transform:scaleX(0.9971);transform-origin:0 0;">11</span>
<div class="r" style="left:330px;top:713px;width:112px;height:19px;background:#ebeef3;"></div>
<div class="r" style="left:793px;top:713px;width:122px;height:19px;background:#e9edf4;"></div>
<div class="r" style="left:65px;top:732px;width:974px;height:1px;background:#bfbfbf;"></div>
<span class="t" style="left:77.00px;top:714.50px;font-size:15.00px;color:#000;transform:scaleX(0.9139);transform-origin:0 0;">Schedule Buffer</span>
<span class="t" style="left:341.00px;top:716.70px;font-size:12.40px;color:#000;transform:scaleX(0.9510);transform-origin:0 0;">In Progress</span>
<span class="t" style="left:622.00px;top:717.55px;font-size:11.40px;color:#000;transform:scaleX(0.9603);transform-origin:0 0;">02-28</span>
<span class="t" style="left:719.00px;top:717.55px;font-size:11.40px;color:#000;transform:scaleX(0.9603);transform-origin:0 0;">03-10</span>
<span class="t" style="left:804.00px;top:717.55px;font-size:11.40px;color:#000;transform:scaleX(0.9971);transform-origin:0 0;">11</span>
<div class="r" style="left:330px;top:733px;width:112px;height:19px;background:#ebeef3;"></div>
<div class="r" style="left:793px;top:733px;width:122px;height:19px;background:#e9edf4;"></div>
<div class="r" style="left:65px;top:752px;width:974px;height:1px;background:#bfbfbf;"></div>
<span class="t" style="left:77.00px;top:734.50px;font-size:15.00px;color:#000;transform:scaleX(0.8638);transform-origin:0 0;">Decks</span>
<span class="t" style="left:341.00px;top:736.70px;font-size:12.40px;color:#000;transform:scaleX(0.9510);transform-origin:0 0;">In Progress</span>
<span class="t" style="left:622.00px;top:737.55px;font-size:11.40px;color:#000;transform:scaleX(0.9603);transform-origin:0 0;">02-28</span>
<span class="t" style="left:719.00px;top:737.55px;font-size:11.40px;color:#000;transform:scaleX(0.9603);transform-origin:0 0;">03-18</span>
<span class="t" style="left:804.00px;top:737.55px;font-size:11.40px;color:#000;transform:scaleX(0.9306);transform-origin:0 0;">19</span>
<div class="r" style="left:330px;top:753px;width:112px;height:19px;background:#d6dce4;"></div>
<div class="r" style="left:793px;top:753px;width:122px;height:19px;background:#e9edf4;"></div>
<div class="r" style="left:65px;top:772px;width:974px;height:1px;background:#bfbfbf;"></div>
<span class="t" style="left:77.00px;top:754.50px;font-size:15.00px;color:#000;transform:scaleX(0.9411);transform-origin:0 0;">Interior doors- hang &amp; hardware</span>
<span class="t" style="left:341.00px;top:756.70px;font-size:12.40px;color:#000;transform:scaleX(0.9723);transform-origin:0 0;">Complete</span>
<span class="t" style="left:622.00px;top:757.55px;font-size:11.40px;color:#000;transform:scaleX(0.9603);transform-origin:0 0;">05-03</span>
<span class="t" style="left:719.00px;top:757.55px;font-size:11.40px;color:#000;transform:scaleX(0.9603);transform-origin:0 0;">05-13</span>
<span class="t" style="left:804.00px;top:757.55px;font-size:11.40px;color:#000;transform:scaleX(0.9971);transform-origin:0 0;">11</span>
<div class="r" style="left:330px;top:773px;width:112px;height:19px;background:#d6dce4;"></div>
<div class="r" style="left:793px;top:773px;width:122px;height:19px;background:#e9edf4;"></div>
<div class="r" style="left:65px;top:792px;width:974px;height:1px;background:#bfbfbf;"></div>
<span class="t" style="left:77.00px;top:774.50px;font-size:15.00px;color:#000;transform:scaleX(0.8994);transform-origin:0 0;">Appliances</span>
<span class="t" style="left:341.00px;top:776.70px;font-size:12.40px;color:#000;transform:scaleX(0.9723);transform-origin:0 0;">Complete</span>
<div class="r" style="left:65px;top:173px;width:1px;height:610px;background:#bfbfbf;"></div>
<div class="r" style="left:329px;top:173px;width:1px;height:610px;background:#bfbfbf;"></div>
<div class="r" style="left:442px;top:173px;width:1px;height:610px;background:#bfbfbf;"></div>
<div class="r" style="left:610px;top:173px;width:1px;height:610px;background:#bfbfbf;"></div>
<div class="r" style="left:707px;top:173px;width:1px;height:610px;background:#bfbfbf;"></div>
<div class="r" style="left:792px;top:173px;width:1px;height:610px;background:#bfbfbf;"></div>
<div class="r" style="left:915px;top:173px;width:1px;height:610px;background:#bfbfbf;"></div>
<div class="r" style="left:1038px;top:173px;width:1px;height:610px;background:#bfbfbf;"></div>
</div>
<div class="r" style="left:278px;top:218px;width:1566px;height:1px;background:#9e9e9e;"></div>
<div class="r" style="left:303px;top:199px;width:1px;height:799px;background:#9e9e9e;"></div>
<div class="r" style="left:369px;top:199px;width:1px;height:19px;background:#b0b0b0;"></div>
<span class="t" style="left:332.63px;top:203.36px;font-size:12.80px;color:#000;transform:scaleX(1.0000);transform-origin:50% 0;">A</span>
<div class="r" style="left:633px;top:199px;width:1px;height:19px;background:#b0b0b0;"></div>
<span class="t" style="left:497.63px;top:203.36px;font-size:12.80px;color:#000;transform:scaleX(1.0000);transform-origin:50% 0;">B</span>
<div class="r" style="left:746px;top:199px;width:1px;height:19px;background:#b0b0b0;"></div>
<span class="t" style="left:685.78px;top:203.36px;font-size:12.80px;color:#000;transform:scaleX(1.0000);transform-origin:50% 0;">C</span>
<div class="r" style="left:914px;top:199px;width:1px;height:19px;background:#b0b0b0;"></div>
<span class="t" style="left:826.28px;top:203.36px;font-size:12.80px;color:#000;transform:scaleX(1.0000);transform-origin:50% 0;">D</span>
<div class="r" style="left:1011px;top:199px;width:1px;height:19px;background:#b0b0b0;"></div>
<span class="t" style="left:959.13px;top:203.36px;font-size:12.80px;color:#000;transform:scaleX(1.0000);transform-origin:50% 0;">E</span>
<div class="r" style="left:1096px;top:199px;width:1px;height:19px;background:#b0b0b0;"></div>
<span class="t" style="left:1050.49px;top:203.36px;font-size:12.80px;color:#000;transform:scaleX(1.0000);transform-origin:50% 0;">F</span>
<div class="r" style="left:1219px;top:199px;width:1px;height:19px;background:#b0b0b0;"></div>
<span class="t" style="left:1153.42px;top:203.36px;font-size:12.80px;color:#000;transform:scaleX(1.0000);transform-origin:50% 0;">G</span>
<div class="r" style="left:1342px;top:199px;width:1px;height:19px;background:#b0b0b0;"></div>
<span class="t" style="left:1276.78px;top:203.36px;font-size:12.80px;color:#000;transform:scaleX(1.0000);transform-origin:50% 0;">H</span>
<div class="r" style="left:1408px;top:199px;width:1px;height:19px;background:#b0b0b0;"></div>
<span class="t" style="left:1374.12px;top:203.36px;font-size:12.80px;color:#000;transform:scaleX(1.0000);transform-origin:50% 0;">I</span>
<div class="r" style="left:1513px;top:199px;width:1px;height:19px;background:#b0b0b0;"></div>
<span class="t" style="left:1458.20px;top:203.36px;font-size:12.80px;color:#000;transform:scaleX(1.0000);transform-origin:50% 0;">J</span>
<div class="r" style="left:1579px;top:199px;width:1px;height:19px;background:#b0b0b0;"></div>
<span class="t" style="left:1542.63px;top:203.36px;font-size:12.80px;color:#000;transform:scaleX(1.0000);transform-origin:50% 0;">K</span>
<div class="r" style="left:1643px;top:199px;width:1px;height:19px;background:#b0b0b0;"></div>
<span class="t" style="left:1608.34px;top:203.36px;font-size:12.80px;color:#000;transform:scaleX(1.0000);transform-origin:50% 0;">L</span>
<div class="r" style="left:1707px;top:199px;width:1px;height:19px;background:#b0b0b0;"></div>
<span class="t" style="left:1670.57px;top:203.36px;font-size:12.80px;color:#000;transform:scaleX(1.0000);transform-origin:50% 0;">M</span>
<div class="r" style="left:1771px;top:199px;width:1px;height:19px;background:#b0b0b0;"></div>
<span class="t" style="left:1735.28px;top:203.36px;font-size:12.80px;color:#000;transform:scaleX(1.0000);transform-origin:50% 0;">N</span>
<div class="r" style="left:1835px;top:199px;width:1px;height:19px;background:#b0b0b0;"></div>
<span class="t" style="left:1798.92px;top:203.36px;font-size:12.80px;color:#000;transform:scaleX(1.0000);transform-origin:50% 0;">O</span>
<svg class="ov" style="left:288px;top:203px" width="13" height="12" viewBox="0 0 13 12"><path d="M12 0.5 V11.5 H0.8 Z" fill="#b5b5b5"/></svg>
<div class="r" style="left:278px;top:253px;width:25px;height:1px;background:#b4b4b4;"></div>
<span class="t" style="left:286.98px;top:237.80px;font-size:13.00px;color:#000;transform:scaleX(0.9500);transform-origin:50% 0;">1</span>
<div class="r" style="left:278px;top:273px;width:25px;height:1px;background:#b4b4b4;"></div>
<span class="t" style="left:286.98px;top:257.80px;font-size:13.00px;color:#000;transform:scaleX(0.9500);transform-origin:50% 0;">2</span>
<div class="r" style="left:278px;top:294px;width:25px;height:1px;background:#b4b4b4;"></div>
<span class="t" style="left:286.98px;top:278.80px;font-size:13.00px;color:#000;transform:scaleX(0.9500);transform-origin:50% 0;">3</span>
<div class="r" style="left:278px;top:314px;width:25px;height:1px;background:#b4b4b4;"></div>
<span class="t" style="left:286.98px;top:298.80px;font-size:13.00px;color:#000;transform:scaleX(0.9500);transform-origin:50% 0;">4</span>
<div class="r" style="left:278px;top:335px;width:25px;height:1px;background:#b4b4b4;"></div>
<span class="t" style="left:286.98px;top:319.80px;font-size:13.00px;color:#000;transform:scaleX(0.9500);transform-origin:50% 0;">5</span>
<div class="r" style="left:278px;top:355px;width:25px;height:1px;background:#b4b4b4;"></div>
<span class="t" style="left:286.98px;top:339.80px;font-size:13.00px;color:#000;transform:scaleX(0.9500);transform-origin:50% 0;">6</span>
<div class="r" style="left:278px;top:391px;width:25px;height:1px;background:#b4b4b4;"></div>
<span class="t" style="left:286.98px;top:375.80px;font-size:13.00px;color:#000;transform:scaleX(0.9500);transform-origin:50% 0;">7</span>
<div class="r" style="left:278px;top:411px;width:25px;height:1px;background:#b4b4b4;"></div>
<span class="t" style="left:286.98px;top:395.80px;font-size:13.00px;color:#000;transform:scaleX(0.9500);transform-origin:50% 0;">8</span>
<div class="r" style="left:278px;top:431px;width:25px;height:1px;background:#b4b4b4;"></div>
<span class="t" style="left:286.98px;top:415.80px;font-size:13.00px;color:#000;transform:scaleX(0.9500);transform-origin:50% 0;">9</span>
<div class="r" style="left:278px;top:451px;width:25px;height:1px;background:#b4b4b4;"></div>
<span class="t" style="left:283.37px;top:435.80px;font-size:13.00px;color:#000;transform:scaleX(0.9500);transform-origin:50% 0;">10</span>
<div class="r" style="left:278px;top:471px;width:25px;height:1px;background:#b4b4b4;"></div>
<span class="t" style="left:283.85px;top:455.80px;font-size:13.00px;color:#000;transform:scaleX(0.9500);transform-origin:50% 0;">11</span>
<div class="r" style="left:278px;top:491px;width:25px;height:1px;background:#b4b4b4;"></div>
<span class="t" style="left:283.37px;top:475.80px;font-size:13.00px;color:#000;transform:scaleX(0.9500);transform-origin:50% 0;">12</span>
<div class="r" style="left:278px;top:511px;width:25px;height:1px;background:#b4b4b4;"></div>
<span class="t" style="left:283.37px;top:495.80px;font-size:13.00px;color:#000;transform:scaleX(0.9500);transform-origin:50% 0;">13</span>
<div class="r" style="left:278px;top:531px;width:25px;height:1px;background:#b4b4b4;"></div>
<span class="t" style="left:283.37px;top:515.80px;font-size:13.00px;color:#000;transform:scaleX(0.9500);transform-origin:50% 0;">14</span>
<div class="r" style="left:278px;top:551px;width:25px;height:1px;background:#b4b4b4;"></div>
<span class="t" style="left:283.37px;top:535.80px;font-size:13.00px;color:#000;transform:scaleX(0.9500);transform-origin:50% 0;">15</span>
<div class="r" style="left:278px;top:571px;width:25px;height:1px;background:#b4b4b4;"></div>
<span class="t" style="left:283.37px;top:555.80px;font-size:13.00px;color:#000;transform:scaleX(0.9500);transform-origin:50% 0;">16</span>
<div class="r" style="left:278px;top:591px;width:25px;height:1px;background:#b4b4b4;"></div>
<span class="t" style="left:283.37px;top:575.80px;font-size:13.00px;color:#000;transform:scaleX(0.9500);transform-origin:50% 0;">17</span>
<div class="r" style="left:278px;top:611px;width:25px;height:1px;background:#b4b4b4;"></div>
<span class="t" style="left:283.37px;top:595.80px;font-size:13.00px;color:#000;transform:scaleX(0.9500);transform-origin:50% 0;">18</span>
<div class="r" style="left:278px;top:631px;width:25px;height:1px;background:#b4b4b4;"></div>
<span class="t" style="left:283.37px;top:615.80px;font-size:13.00px;color:#000;transform:scaleX(0.9500);transform-origin:50% 0;">19</span>
<div class="r" style="left:278px;top:651px;width:25px;height:1px;background:#b4b4b4;"></div>
<span class="t" style="left:283.37px;top:635.80px;font-size:13.00px;color:#000;transform:scaleX(0.9500);transform-origin:50% 0;">20</span>
<div class="r" style="left:278px;top:671px;width:25px;height:1px;background:#b4b4b4;"></div>
<span class="t" style="left:283.37px;top:655.80px;font-size:13.00px;color:#000;transform:scaleX(0.9500);transform-origin:50% 0;">21</span>
<div class="r" style="left:278px;top:691px;width:25px;height:1px;background:#b4b4b4;"></div>
<span class="t" style="left:283.37px;top:675.80px;font-size:13.00px;color:#000;transform:scaleX(0.9500);transform-origin:50% 0;">22</span>
<div class="r" style="left:278px;top:711px;width:25px;height:1px;background:#b4b4b4;"></div>
<span class="t" style="left:283.37px;top:695.80px;font-size:13.00px;color:#000;transform:scaleX(0.9500);transform-origin:50% 0;">23</span>
<div class="r" style="left:278px;top:731px;width:25px;height:1px;background:#b4b4b4;"></div>
<span class="t" style="left:283.37px;top:715.80px;font-size:13.00px;color:#000;transform:scaleX(0.9500);transform-origin:50% 0;">24</span>
<div class="r" style="left:278px;top:751px;width:25px;height:1px;background:#b4b4b4;"></div>
<span class="t" style="left:283.37px;top:735.80px;font-size:13.00px;color:#000;transform:scaleX(0.9500);transform-origin:50% 0;">25</span>
<div class="r" style="left:278px;top:771px;width:25px;height:1px;background:#b4b4b4;"></div>
<span class="t" style="left:283.37px;top:755.80px;font-size:13.00px;color:#000;transform:scaleX(0.9500);transform-origin:50% 0;">26</span>
<div class="r" style="left:278px;top:791px;width:25px;height:1px;background:#b4b4b4;"></div>
<span class="t" style="left:283.37px;top:775.80px;font-size:13.00px;color:#000;transform:scaleX(0.9500);transform-origin:50% 0;">27</span>
<div class="r" style="left:278px;top:811px;width:25px;height:1px;background:#b4b4b4;"></div>
<span class="t" style="left:283.37px;top:795.80px;font-size:13.00px;color:#000;transform:scaleX(0.9500);transform-origin:50% 0;">28</span>
<div class="r" style="left:278px;top:831px;width:25px;height:1px;background:#b4b4b4;"></div>
<span class="t" style="left:283.37px;top:815.80px;font-size:13.00px;color:#000;transform:scaleX(0.9500);transform-origin:50% 0;">29</span>
<div class="r" style="left:278px;top:851px;width:25px;height:1px;background:#b4b4b4;"></div>
<span class="t" style="left:283.37px;top:835.80px;font-size:13.00px;color:#000;transform:scaleX(0.9500);transform-origin:50% 0;">30</span>
<div class="r" style="left:278px;top:871px;width:25px;height:1px;background:#b4b4b4;"></div>
<span class="t" style="left:283.37px;top:855.80px;font-size:13.00px;color:#000;transform:scaleX(0.9500);transform-origin:50% 0;">31</span>
<div class="r" style="left:278px;top:891px;width:25px;height:1px;background:#b4b4b4;"></div>
<span class="t" style="left:283.37px;top:875.80px;font-size:13.00px;color:#000;transform:scaleX(0.9500);transform-origin:50% 0;">32</span>
<div class="r" style="left:278px;top:911px;width:25px;height:1px;background:#b4b4b4;"></div>
<span class="t" style="left:283.37px;top:895.80px;font-size:13.00px;color:#000;transform:scaleX(0.9500);transform-origin:50% 0;">33</span>
<div class="r" style="left:278px;top:931px;width:25px;height:1px;background:#b4b4b4;"></div>
<span class="t" style="left:283.37px;top:915.80px;font-size:13.00px;color:#000;transform:scaleX(0.9500);transform-origin:50% 0;">34</span>
<div class="r" style="left:278px;top:951px;width:25px;height:1px;background:#b4b4b4;"></div>
<span class="t" style="left:283.37px;top:935.80px;font-size:13.00px;color:#000;transform:scaleX(0.9500);transform-origin:50% 0;">35</span>
<div class="r" style="left:278px;top:971px;width:25px;height:1px;background:#b4b4b4;"></div>
<span class="t" style="left:283.37px;top:955.80px;font-size:13.00px;color:#000;transform:scaleX(0.9500);transform-origin:50% 0;">36</span>
<div class="r" style="left:278px;top:991px;width:25px;height:1px;background:#b4b4b4;"></div>
<span class="t" style="left:283.37px;top:975.80px;font-size:13.00px;color:#000;transform:scaleX(0.9500);transform-origin:50% 0;">37</span>
<div class="r" style="left:1843px;top:219px;width:1px;height:780px;background:#999999;"></div>
<div class="r" style="left:278px;top:998px;width:1566px;height:1px;background:#999999;"></div>
<div class="r" style="left:1847px;top:201px;width:15px;height:15px;background:#ffffff;border:1px solid #ababab;"></div>
<div class="r" style="left:1847px;top:216px;width:15px;height:651px;background:#ffffff;border:1px solid #ababab;"></div>
<div class="r" style="left:1847px;top:867px;width:15px;height:117px;background:#dadada;"></div>
<div class="r" style="left:1847px;top:984px;width:15px;height:15px;background:#ffffff;border:1px solid #ababab;"></div>
<svg class="ov" style="left:1850px;top:205px" width="9" height="6" viewBox="0 0 9 6"><path d="M4.5 0.8 L8.2 5 H0.8 Z" fill="#6a6a6a"/></svg>
<svg class="ov" style="left:1850px;top:989px" width="9" height="6" viewBox="0 0 9 6"><path d="M4.5 5.2 L8.2 1 H0.8 Z" fill="#6a6a6a"/></svg>
<div class="r" style="left:278px;top:999px;width:1566px;height:27px;background:#e6e6e6;"></div>
<div class="r" style="left:378px;top:998px;width:65px;height:25px;background:#ffffff;border-left:1px solid #b4b4b4;border-right:1px solid #b4b4b4;border-bottom:2px solid #217346;"></div>
<span class="t" style="left:388.23px;top:1005.26px;font-size:13.40px;color:#217346;font-weight:bold;transform:scaleX(0.9148);transform-origin:50% 0;">Sheet1</span>
<svg class="ov" style="left:300px;top:1004px" width="200" height="18" viewBox="0 0 200 18"><path d="M9.2 4 V11.4 L4.8 7.7 Z" fill="#c0c0c0"/><path d="M33.8 4 V11.4 L38.2 7.7 Z" fill="#c0c0c0"/><circle cx="183.9" cy="8" r="7" fill="none" stroke="#c4c4c4" stroke-width="1.1"/><path d="M180.2 8 H187.6 M183.9 4.3 V11.7" stroke="#c4c4c4" stroke-width="1.2" fill="none"/></svg>
<div class="r" style="left:1230px;top:1007px;width:2px;height:2px;background:#a8a8a8;"></div>
<div class="r" style="left:1230px;top:1011px;width:2px;height:2px;background:#a8a8a8;"></div>
<div class="r" style="left:1230px;top:1015px;width:2px;height:2px;background:#a8a8a8;"></div>
<div class="r" style="left:1247px;top:1005px;width:15px;height:15px;background:#ffffff;border:1px solid #ababab;"></div>
<div class="r" style="left:1262px;top:1005px;width:529px;height:15px;background:#ffffff;border:1px solid #ababab;"></div>
<div class="r" style="left:1791px;top:1005px;width:38px;height:15px;background:#dadada;"></div>
<div class="r" style="left:1829px;top:1005px;width:15px;height:15px;background:#ffffff;border:1px solid #ababab;"></div>
<svg class="ov" style="left:1251px;top:1008px" width="6" height="9" viewBox="0 0 6 9"><path d="M0.8 4.5 L5 0.8 V8.2 Z" fill="#6a6a6a"/></svg>
<svg class="ov" style="left:1834px;top:1008px" width="6" height="9" viewBox="0 0 6 9"><path d="M5.2 4.5 L1 0.8 V8.2 Z" fill="#6a6a6a"/></svg>
<svg class="ov" style="left:0;top:0" width="1920" height="1080" viewBox="0 0 1920 1080">
<g fill="none" stroke="#6e6e6e" stroke-width="2" stroke-linejoin="round" stroke-linecap="butt">
<path d="M17 94 H29.5 L34 98.5 V111 Q34 112 33 112 H17 Q16 112 16 111 V95 Q16 94 17 94 Z"/>
<path d="M21.1 94 V100.7 H27.9 V94" stroke-width="1.8" stroke-linejoin="miter"/>
<path d="M25.5 96 V99" stroke-width="1.2"/>
<path d="M20.8 112 V105.7 H29.4 V112" stroke-width="1.2" stroke-linejoin="miter" fill="#e2e2e2"/>
<path d="M68.90 93.00 L71.81 99.90 L79.27 100.53 L73.61 105.43 L75.31 112.72 L68.90 108.85 L62.49 112.72 L64.19 105.43 L58.53 100.53 L65.99 99.90 Z" stroke-width="1.8" stroke-linejoin="round"/>
<path d="M108.8 107.9 H107.6 A4.7 4.7 0 0 1 107.2 98.7 A6 6 0 0 1 118.8 98.7 A4.7 4.7 0 0 1 118.4 107.9 H117.2" stroke-linecap="round"/>
<path d="M113 113.4 V101.6 M109.7 104.6 L113 101.2 L116.3 104.6" stroke-width="1.9"/>
<path d="M63 143.2 H71.6 V146.6 H83 V160 H63 Z"/>
<path d="M64 149.6 H71.6 L72.4 148.8 H82" stroke-width="1.2"/>
<path d="M108.2 150.6 V142.2 H116.6 L122.8 148.4 V160 H108.6 Q107.6 159.6 108.4 157.6"/>
<path d="M116.2 142.4 V148.8 H122.6"/>
<path d="M103.6 157.8 Q106 152.2 112 152.6"/>
<path d="M147.2 144 H167.6" stroke-width="1.8"/>
<path d="M154 143.6 V141.2 H161 V143.6" stroke-width="1.8"/>
<path d="M149.8 144.6 L151.2 160.6 H163.8 L165.2 144.6" stroke-width="1.8"/>
<path d="M154.6 147.4 V157.6 M157.5 147.4 V157.6 M160.4 147.4 V157.6" stroke-width="1.1"/>
<path d="M21 160 H12.4 V141.2 H20.4 L27 147.8 V149.6"/>
<path d="M20 141.6 V148 H26.6"/>
<circle cx="250" cy="153.8" r="9.5" stroke-width="2.1"/>
<path d="M255.6 153.8 H245.2 M249.4 149.4 L245 153.8 L249.4 158.2" stroke-width="2.1"/>
<circle cx="289" cy="153.8" r="9.5" stroke-width="2.1"/>
<path d="M283.4 153.8 H293.8 M289.6 149.4 L294 153.8 L289.6 158.2" stroke-width="2.1"/>
<circle cx="1810.6" cy="60.7" r="9.4" stroke-width="2.1"/>
<rect x="1839" y="95" width="20" height="15" stroke-width="1.8"/>
<path d="M1839.6 95.6 L1849 103.6 L1858.4 95.6 M1839.6 109.6 L1846.6 101.8 M1858.4 109.6 L1851.4 101.8" stroke-width="1.1"/>
<path d="M1802.92 97.12 L1806.72 93.57 A3.05 3.05 0 0 1 1810.88 98.03 L1805.61 102.94 A3.05 3.05 0 0 1 1801.30 102.79" stroke-width="2.1" stroke-linecap="butt"/>
<path d="M1802.64 106.99 L1799.13 110.26 A3.05 3.05 0 0 1 1794.97 105.80 L1800.24 100.89 A3.05 3.05 0 0 1 1805.00 101.66" stroke-width="2.1" stroke-linecap="butt"/>
</g>
<g fill="#6e6e6e" stroke="none">
<rect x="21.4" y="106.3" width="7.4" height="4.7" fill="#e2e2e2"/>
<rect x="64.2" y="150.4" width="17.6" height="8.6" fill="#e2e2e2"/>
<path d="M146.4 98.4 H165.6 Q166.8 98.4 166.8 99.6 V106.4 Q166.8 107.6 165.6 107.6 H163.6 V103.6 H148.4 V107.6 H146.4 Q145.2 107.6 145.2 106.4 V99.6 Q145.2 98.4 146.4 98.4 Z"/>
<path d="M148.4 98.6 V93 H163.6 V98.6 M148.4 103.8 V111.8 H163.6 V103.8" fill="none" stroke="#6e6e6e" stroke-width="1.8" stroke-linejoin="round"/>
<path d="M153 106.4 H159 M153 108.6 H159" fill="none" stroke="#6e6e6e" stroke-width="0.9"/>
<rect x="162" y="100.6" width="2.2" height="1.2" rx="0.5" fill="#e8e8e8"/>
<path d="M110.6 148.4 L116 153 L110.8 158 Z"/>
<circle cx="26.9" cy="157" r="5.9"/>
<path d="M23.6 157 H30.2 M26.9 153.7 V160.3" stroke="#fafafa" stroke-width="1.9" fill="none"/>
<path d="M38.2 150.4 H44.8 L41.5 153.9 Z"/>
<path d="M1762 52 H1778 Q1780 52 1780 54 V64.4 Q1780 66.4 1778 66.4 H1769.6 L1765.4 71.6 L1765 66.4 H1762 Q1760 66.4 1760 64.4 V54 Q1760 52 1762 52 Z"/>
<circle cx="1765.2" cy="59.6" r="1.05" fill="#eaeaea"/><circle cx="1770" cy="59.6" r="1.05" fill="#eaeaea"/><circle cx="1774.8" cy="59.6" r="1.05" fill="#eaeaea"/>
<path d="M1850.5 53.2 V52.6 Q1850.5 51.7 1851.4 51.7 Q1852.3 51.7 1852.3 52.6 V53.2 Q1856.6 54.2 1856.9 59 L1857.3 63 Q1857.7 66 1860 67.5 V68.3 H1842.8 V67.5 Q1845.1 66 1845.5 63 L1845.9 59 Q1846.2 54.2 1850.5 53.2 Z"/>
<path d="M1848.8 69.6 H1854 Q1853.4 71.3 1851.4 71.3 Q1849.4 71.3 1848.8 69.6 Z"/>
<circle cx="1893" cy="61" r="11.8" fill="#00c8fb"/>
<path d="M1893.6 50 Q1901.4 50.6 1904.2 58.6 L1904.6 63.2 L1889 62.2 Z" fill="#00a0c6"/>
<g stroke="#fafafa" stroke-width="1.6"><circle cx="1811.3" cy="108.4" r="3.4"/><circle cx="1814.5" cy="111.2" r="2.7"/><circle cx="1806.7" cy="111.4" r="2.5"/><rect x="1806.7" y="109.6" width="7.8" height="4.3"/></g>
<circle cx="1811.3" cy="108.4" r="3.4"/><circle cx="1814.5" cy="111.2" r="2.7"/><circle cx="1806.7" cy="111.4" r="2.5"/><rect x="1806.7" y="109.6" width="7.8" height="4.3"/>
<ellipse cx="1889.7" cy="96.8" rx="4.3" ry="4.9"/>
<path d="M1887.4 99.6 H1892 V102.4 Q1892.4 103.4 1894.4 104 L1897.6 105.2 L1896 109.7 H1881 V107.4 Q1881.2 105.2 1883.6 104.4 L1886.4 103.4 Q1887.4 102.9 1887.4 102.2 Z"/>
<circle cx="1899" cy="109" r="6.3" stroke="#fafafa" stroke-width="0.6"/>
<path d="M1896 109 H1902 M1899 106 V112" stroke="#d4d4d4" stroke-width="1.4" fill="none"/>
</g>
<path d="M12 138.5 H44 M12 163.5 H44 M12.5 138 V164 M43.5 138 V164" fill="none" stroke="#000" stroke-width="1" stroke-dasharray="1 1" shape-rendering="crispEdges"/>
</svg>
<span class="t" style="left:1806.48px;top:54.17px;font-size:13.50px;color:#666;font-weight:bold;transform:scaleX(0.8974);transform-origin:50% 0;">?</span>
</body>
</html>
